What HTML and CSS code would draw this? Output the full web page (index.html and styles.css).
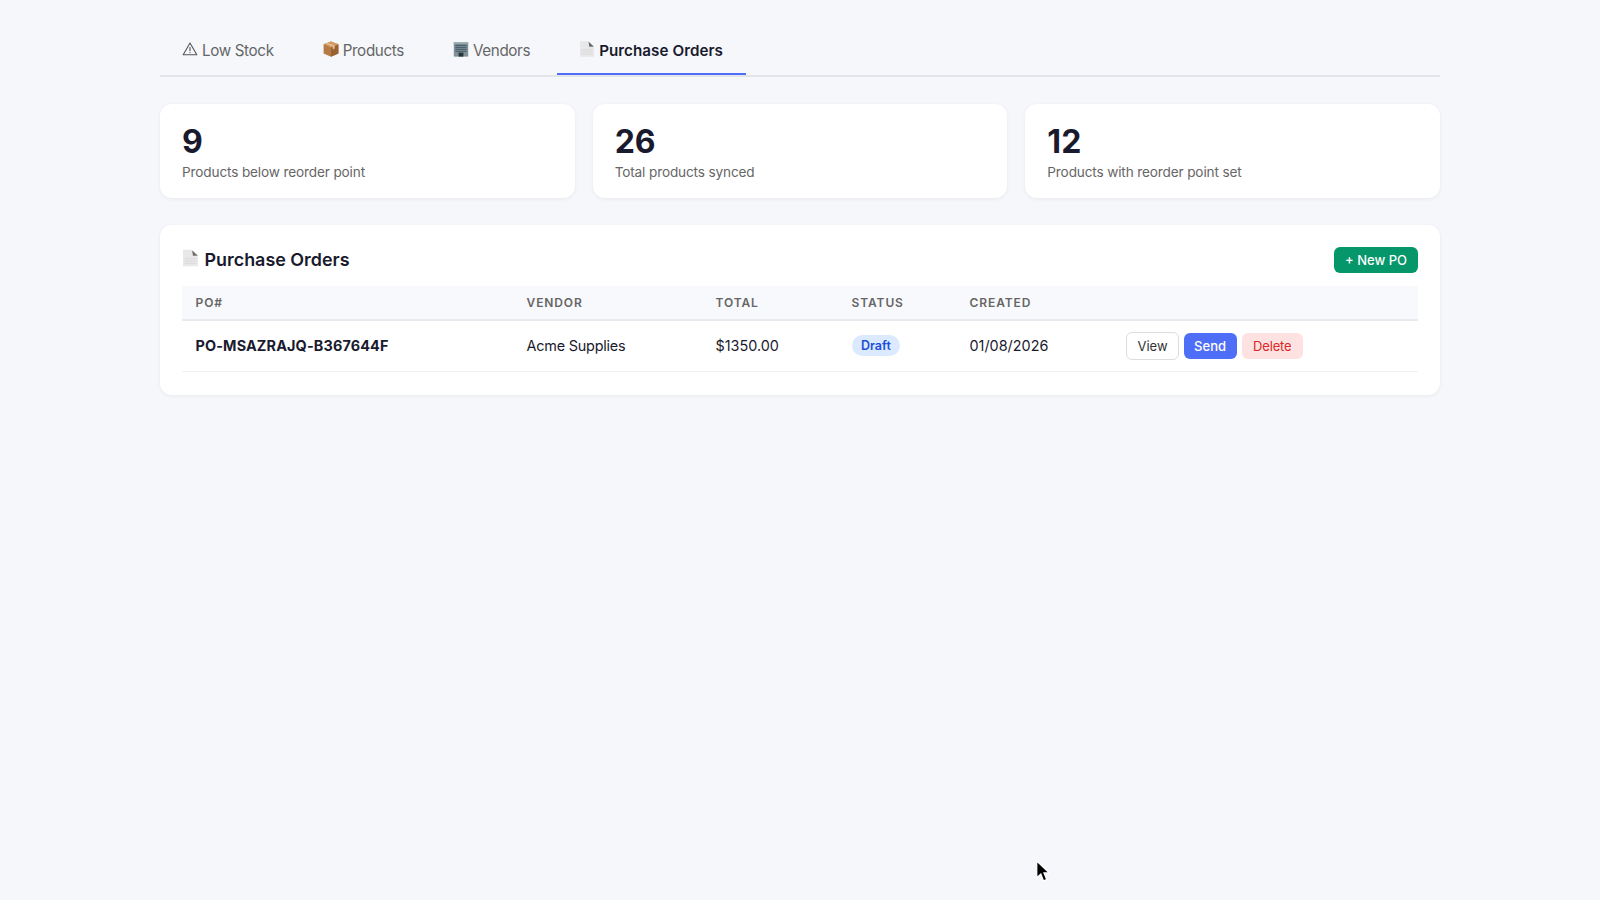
FILE: index.html

```html
<!DOCTYPE html>
<html lang="en">
<head>
	<meta charset="utf-8" />
	<title>Purchase Orders</title>
	<link rel="stylesheet" href="styles.css">
</head>

<body>
<div class="container">
  <nav class="tabs">
    <a class="tab">
      <svg class="emoji" viewBox="0 0 16 16"><path d="M8 2 14.8 13.8H1.2Z" fill="none" stroke="#555" stroke-width="1.1" stroke-linejoin="round"/><path d="M8 6v4.2M8 11.2v1" stroke="#555" stroke-width="1.1"/></svg>
      Low Stock
    </a>
    <a class="tab">
      <svg class="emoji" viewBox="0 0 16 16"><path d="M8 .4 15.4 3.2V12.4L8 15.8 .6 12.4V3.2Z" fill="#b67a45"/><path d="M8 6.4 15.4 3.2V12.4L8 15.8Z" fill="#9a6233"/><path d="M8 .4 15.4 3.2 8 6.4 .6 3.2Z" fill="#d39a63"/><path d="M4.4 1.9 11.6 4.8V7.6L9.8 8.4V5.6L2.6 2.6Z" fill="#e6c39a"/></svg>
      Products
    </a>
    <a class="tab">
      <svg class="emoji" viewBox="0 0 16 16"><rect x=".8" y="1" width="14.4" height="14.6" fill="#7f9099"/><rect x=".8" y="1" width="14.4" height="1.8" fill="#a3afb5"/><path d="M2.4 4.4h11.2M2.4 6.4h11.2M2.4 8.4h11.2M2.4 10.4h11.2" stroke="#4d6470" stroke-width="1.1"/><rect x="5.6" y="11.6" width="4.8" height="4" fill="#26343b"/></svg>
      Vendors
    </a>
    <a class="tab active">
      <svg class="emoji" viewBox="0 0 16 16"><path d="M1 .2H9.5V5.2L15 6.5V15.8H1Z" fill="#e8e8e8"/><path d="M9.5 .6 15 5.8H10.2Z" fill="#6b6b6b"/><path d="M2.5 8.6h11M2.5 10.8h11M2.5 13h11" stroke="#d8d8d8" stroke-width=".8"/></svg>
      Purchase Orders
    </a>
  </nav>

  <div class="stats">
    <div class="card stat">
      <div class="stat-value">9</div>
      <div class="stat-label">Products below reorder point</div>
    </div>
    <div class="card stat">
      <div class="stat-value">26</div>
      <div class="stat-label">Total products synced</div>
    </div>
    <div class="card stat">
      <div class="stat-value">12</div>
      <div class="stat-label">Products with reorder point set</div>
    </div>
  </div>

  <div class="card panel">
    <div class="panel-head">
      <h2>
        <svg class="emoji emoji-big" viewBox="0 0 16 16"><path d="M1 .2H9.5V5.2L15 6.5V15.8H1Z" fill="#e8e8e8"/><path d="M9.5 .6 15 5.8H10.2Z" fill="#6b6b6b"/><path d="M2.5 8.6h11M2.5 10.8h11M2.5 13h11" stroke="#d8d8d8" stroke-width=".8"/></svg>
        Purchase Orders
      </h2>
      <button class="btn btn-green">+ New PO</button>
    </div>
    <table>
      <thead>
        <tr>
          <th class="col-po">PO#</th>
          <th class="col-vendor">Vendor</th>
          <th class="col-total">Total</th>
          <th class="col-status">Status</th>
          <th class="col-created">Created</th>
          <th></th>
        </tr>
      </thead>
      <tbody>
        <tr>
          <td class="po-num">PO-MSAZRAJQ-B367644F</td>
          <td class="vendor">Acme Supplies</td>
          <td>$1350.00</td>
          <td><span class="badge">Draft</span></td>
          <td>01/08/2026</td>
          <td class="actions">
            <button class="btn btn-white">View</button>
            <button class="btn btn-blue">Send</button>
            <button class="btn btn-red">Delete</button>
          </td>
        </tr>
      </tbody>
    </table>
  </div>
</div>

<svg class="cursor" viewBox="0 0 14 22"><path d="M1.5 1V17L5.4 13.4 8 20 11 18.7 8.4 12.4H13.6Z" fill="#000" stroke="#fff" stroke-width="1.2"/></svg>
</body>
</html>
```

FILE: styles.css

```css
* {
  box-sizing: border-box;
}

body {
  margin: 0;
  background: #f5f7fb;
  color: #1a1a2e;
  font-family: Inter, "Liberation Sans", sans-serif;
  min-height: 900px;
}

.container {
  width: 1280px;
  margin: 0 auto;
  padding-top: 27px;
}

.tabs {
  display: flex;
  gap: 4px;
  border-bottom: 2px solid #e2e4e9;
  margin-bottom: 27px;
}

.tab {
  display: flex;
  align-items: center;
  gap: 4px;
  height: 48px;
  padding: 0 23px 0 22px;
  font-size: 15.2px;
  letter-spacing: -.35px;
  color: #666;
  border-bottom: 2px solid transparent;
}

.tab.active {
  color: #1a1a2e;
  font-weight: 600;
  letter-spacing: .05px;
  border-bottom-color: #4f6ef7;
}

.emoji {
  width: 16px;
  height: 16px;
  flex: none;
  margin-top: -3px;
}

.emoji-big {
  width: 17px;
  height: 18px;
}

.stats {
  display: grid;
  grid-template-columns: repeat(3, 1fr);
  gap: 18px;
  margin-bottom: 27px;
}

.card {
  background: #fff;
  border-radius: 12px;
  box-shadow: 0 1px 4px rgba(0, 0, 0, .06);
}

.stat {
  padding: 19px 22px 0;
  height: 94px;
}

.stat-value {
  font-size: 32px;
  font-weight: 700;
  line-height: 38px;
}

.stat-label {
  font-size: 13.6px;
  letter-spacing: -.14px;
  color: #666;
  margin-top: 3px;
}

.panel {
  padding: 22px 22px 22px;
  height: 170px;
}

.panel-head {
  display: flex;
  justify-content: space-between;
  align-items: center;
  height: 26px;
  margin-bottom: 13px;
}

h2 {
  display: flex;
  align-items: center;
  gap: 5.5px;
  margin: 0;
  padding-bottom: 2px;
  font-size: 17.92px;
  font-weight: 600;
}

table {
  width: 100%;
  border-collapse: collapse;
  table-layout: fixed;
}

th {
  background: #f8f9fc;
  color: #666;
  font-size: 12px;
  font-weight: 600;
  letter-spacing: .075em;
  text-align: left;
  text-transform: uppercase;
  height: 34px;
  padding: 0 13.5px;
  border-bottom: 2px solid #e8eaef;
}

td {
  font-size: 14.4px;
  height: 51px;
  padding: 0 13.5px;
  border-bottom: 1px solid #f0f1f4;
}

.col-po {
  width: 331px;
}

.col-vendor {
  width: 189px;
}

.col-total {
  width: 136px;
}

.col-status {
  width: 118px;
}

.col-created {
  width: 157px;
}

.po-num {
  font-weight: 700;
  letter-spacing: .01em;
}

.vendor {
  letter-spacing: -.2px;
}

.badge {
  display: inline-block;
  padding: 3px 9.5px;
  border-radius: 20px;
  background: #dbeafe;
  color: #1d4ed8;
  font-size: 12.5px;
  font-weight: 600;
}

.actions {
  white-space: nowrap;
  font-size: 0;
  padding-left: 13px;
}

.btn {
  height: 26px;
  padding: 0 11px;
  border: none;
  border-radius: 6px;
  font-family: inherit;
  font-size: 13px;
  font-weight: 500;
  cursor: pointer;
}

.actions .btn {
  margin-right: 4.5px;
}

.actions .btn-blue {
  margin-right: 5.5px;
}

.btn-green {
  background: #059669;
  color: #fff;
}

.btn-white {
  background: #fff;
  color: #333;
  border: 1px solid #ddd;
  height: 28px;
  font-weight: 400;
  padding: 0 10.5px;
}

.btn-blue {
  background: #4f6ef7;
  color: #fff;
  padding: 0 10.5px;
}

.btn-red {
  background: #fee2e2;
  color: #dc2626;
  font-weight: 400;
  padding: 0 11px;
  letter-spacing: -.15px;
}

/* mouse pointer caught in the shot */
.cursor {
  position: absolute;
  left: 1035px;
  top: 860px;
  width: 15px;
  height: 23px;
}
```
